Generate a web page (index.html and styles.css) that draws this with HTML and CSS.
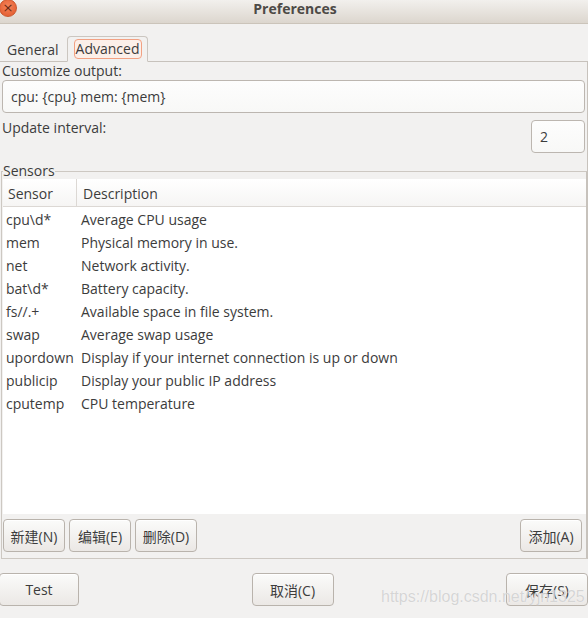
FILE: index.html
```html
<!DOCTYPE html>
<html>
<head>
<meta charset="utf-8">
<link rel="stylesheet" href="styles.css">
</head>
<body>
<div class="window">
  <div class="titlebar">
    <span class="close">×</span>
    <span class="title">Preferences</span>
  </div>
  <div class="tabs">
    <div class="tab">General</div>
    <div class="tab active"><span class="focus">Advanced</span></div>
  </div>
  <div class="notebook">
    <div class="label">Customize output:</div>
    <div class="entry">cpu: {cpu} mem: {mem}</div>
    <div class="interval-row">
      <div class="label">Update interval:</div>
      <div class="spin">2</div>
    </div>
    <fieldset class="frame">
      <legend>Sensors</legend>
      <div class="tree">
        <div class="tree-head">
          <div class="col1">Sensor</div>
          <div class="col2">Description</div>
        </div>
        <div class="rows">
          <div class="row"><div class="col1">cpu\d*</div><div class="col2">Average CPU usage</div></div>
          <div class="row"><div class="col1">mem</div><div class="col2">Physical memory in use.</div></div>
          <div class="row"><div class="col1">net</div><div class="col2">Network activity.</div></div>
          <div class="row"><div class="col1">bat\d*</div><div class="col2">Battery capacity.</div></div>
          <div class="row"><div class="col1">fs//.+</div><div class="col2">Available space in file system.</div></div>
          <div class="row"><div class="col1">swap</div><div class="col2">Average swap usage</div></div>
          <div class="row"><div class="col1">upordown</div><div class="col2">Display if your internet connection is up or down</div></div>
          <div class="row"><div class="col1">publicip</div><div class="col2">Display your public IP address</div></div>
          <div class="row"><div class="col1">cputemp</div><div class="col2">CPU temperature</div></div>
        </div>
      </div>
      <div class="frame-buttons">
        <div class="btn small">新建(N)</div>
        <div class="btn small">编辑(E)</div>
        <div class="btn small">删除(D)</div>
        <div class="spacer"></div>
        <div class="btn small">添加(A)</div>
      </div>
    </fieldset>
  </div>
  <div class="actions">
    <div class="btn big test">Test</div>
    <div class="btn big">取消(C)</div>
    <div class="btn big">保存(S)</div>
  </div>
  <div class="watermark">https://blog.csdn.net/yjn1325</div>
</div>
</body>
</html>
```

FILE: styles.css
```css
* { box-sizing: border-box; }
html, body { margin: 0; padding: 0; }
body {
  background: #f2f1f0;
  font-family: "Open Sans", "Noto Sans CJK SC", sans-serif;
  font-size: 14px;
  color: #3c3c3c;
}
.window {
  position: relative;
  width: 588px;
  height: 618px;
  overflow: hidden;
}
.titlebar {
  height: 24px;
  background: linear-gradient(#f2f0ed, #dcd6ce);
  border-bottom: 1px solid #cbc4ba;
  display: flex;
  justify-content: center;
  padding-top: 0;
  position: relative;
}
.close {
  position: absolute;
  left: -1px;
  top: -1px;
  width: 18px;
  height: 18px;
  border-radius: 50%;
  background: radial-gradient(circle at 50% 40%, #f5845a, #e0562a);
  border: 1px solid #c9582f;
  color: #6b2a14;
  font-size: 13px;
  line-height: 15px;
  text-align: center;
  font-family: "DejaVu Sans", sans-serif;
}
.title {
  font-weight: bold;
  color: #4d4a46;
  font-size: 14px;
  line-height: 18px;
  margin-left: 2px;
}
.tabs {
  display: flex;
  align-items: flex-end;
  padding-left: 1px;
  height: 37px;
}
.tab {
  height: 26px;
  padding: 0 6px;
  display: flex;
  align-items: center;
  margin-bottom: -1px;
}
.tab.active {
  margin-left: 2px;
  border: 1px solid #cbc6c0;
  border-bottom: 1px solid #f2f1f0;
  border-radius: 4px 4px 0 0;
  background: #f2f1f0;
  padding: 0 5px 0 6px;
  position: relative;
}
.focus {
  border: 1px solid #f2a183;
  border-radius: 4px;
  background: #fcefe9;
  padding: 0 2px 1px 1px;
  line-height: 17px;
}
.notebook {
  border-top: 1px solid #c7c2bc;
  border-right: 1px solid #c7c2bc;
  padding: 0 1px 0 2px;
  height: 498px;
}
.label {
  line-height: 17px;
  height: 18px;
}
.entry {
  height: 33px;
  width: 583px;
  border: 1px solid #bcb6b0;
  border-radius: 4px;
  background: linear-gradient(#fdfdfd, #f8f8f7);
  padding: 0 8px;
  display: flex;
  align-items: center;
}
.interval-row {
  display: flex;
  justify-content: space-between;
  padding-top: 7px;
  height: 50px;
}
.interval-row .label { margin-top: -1px; }
.spin {
  width: 54px;
  height: 33px;
  border: 1px solid #bcb6b0;
  border-radius: 4px;
  background: linear-gradient(#fdfdfd, #f8f8f7);
  padding: 0 8px;
  display: flex;
  align-items: center;
  margin-right: 1px;
}
.frame {
  margin: 0 0 0 -1px;
  padding: 0 0 6px 0;
  border: 1px solid #cdc8c2;
  border-right: 2px solid #c7c2bc;
  width: 587px;
  height: 396px;
}
.frame legend {
  padding: 0;
  margin-left: 1px;
  line-height: 16px;
}
.tree {
  margin-left: 1px;
  margin-top: 0;
  width: 583px;
  height: 335px;
  background: #fff;
}
.tree-head {
  height: 28px;
  display: flex;
  background: linear-gradient(#ffffff, #f6f5f4);
  border-bottom: 1px solid #dcd8d4;
}
.tree-head .col1 {
  border-right: 1px solid #dcd8d4;
}
.tree-head > div, .row > div {
  display: flex;
  align-items: center;
}
.tree-head > div { padding-top: 2px; }
.col1 {
  width: 74px;
  padding-left: 5px;
  white-space: nowrap;
}
.col2 {
  padding-left: 6px;
  white-space: nowrap;
}
.row .col1 { padding-left: 3px; }
.row .col2 { padding-left: 4px; }
.row {
  display: flex;
  height: 23px;
  padding-top: 1px;
}
.frame-buttons {
  display: flex;
  gap: 4px;
  padding: 5px 4px 0 1px;
}
.spacer { flex: 1; }
.btn {
  border: 1px solid #b9b3ac;
  border-radius: 4px;
  background: linear-gradient(#fbfbfa, #ebe8e5);
  display: flex;
  align-items: center;
  justify-content: center;
  height: 33px;
  box-shadow: inset 0 1px 0 #fff;
  white-space: nowrap;
}
.btn.small {
  width: 62px;
}
.actions {
  display: flex;
  justify-content: space-between;
  padding-top: 14px;
}
.btn.big {
  width: 82px;
}
.btn.test {
  width: 80px;
  margin-left: -1px;
}
.watermark {
  position: absolute;
  left: 381px;
  top: 588px;
  font-family: "Liberation Sans", sans-serif;
  font-size: 16px;
  color: rgba(200, 200, 200, 0.75);
  text-shadow: 0 0 1px #fff;
}
```
